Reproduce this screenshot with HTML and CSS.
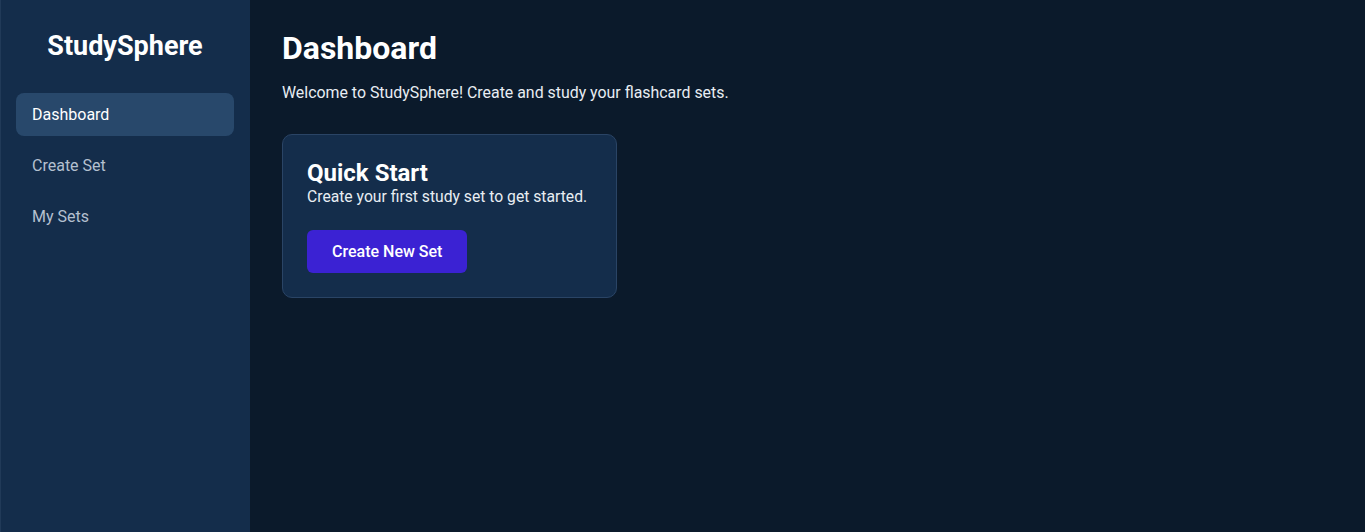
FILE: index.html
```html
<!DOCTYPE html>
<html lang="en">
<head>
<meta charset="utf-8">
<title>StudySphere</title>
<link rel="stylesheet" href="styles.css">
</head>
<body>
<div class="app">
  <aside class="sidebar">
    <div class="brand">StudySphere</div>
    <nav class="nav">
      <a class="nav-item active">Dashboard</a>
      <a class="nav-item">Create Set</a>
      <a class="nav-item">My Sets</a>
    </nav>
  </aside>
  <main class="main">
    <h1 class="title">Dashboard</h1>
    <p class="intro">Welcome to StudySphere! Create and study your flashcard sets.</p>
    <section class="card">
      <h2 class="card-title">Quick Start</h2>
      <p class="card-text">Create your first study set to get started.</p>
      <button class="btn">Create New Set</button>
    </section>
  </main>
</div>
</body>
</html>
```
FILE: styles.css
```css
* { box-sizing: border-box; }
html, body { margin: 0; height: 100%; }
body {
  font-family: Roboto, "Noto Sans", sans-serif;
  background: #0b1a2b;
  color: #f1f5f9;
}
.app { display: flex; min-height: 100vh; }
.sidebar {
  width: 250px;
  flex-shrink: 0;
  background: #142d4b;
  border-left: 1px solid #213a58;
  padding: 30px 16px 16px 15px;
}
.brand {
  font-size: 27px;
  font-weight: 700;
  text-align: center;
  color: #ffffff;
  line-height: 33px;
  margin-bottom: 30px;
}
.nav { display: flex; flex-direction: column; gap: 8px; }
.nav-item {
  display: block;
  padding: 12px 16px;
  border-radius: 8px;
  font-size: 16px;
  line-height: 19px;
  color: #b4c0d0;
  cursor: pointer;
}
.nav-item.active { background: #28486b; color: #ffffff; }
.main { flex: 1; padding: 28px 32px; }
.title {
  margin: 0;
  font-size: 32px;
  font-weight: 700;
  line-height: 40px;
  color: #ffffff;
}
.intro {
  margin: 15px 0 31px;
  font-size: 15.9px;
  line-height: 20px;
  color: #e8edf3;
}
.card {
  width: 335px;
  background: #142d4b;
  border: 1px solid #2a4465;
  border-radius: 10px;
  padding: 24px;
}
.card-title {
  margin: 0;
  font-size: 24px;
  font-weight: 700;
  line-height: 28px;
  color: #ffffff;
}
.card-text {
  margin: 0 0 23px;
  font-size: 15.7px;
  line-height: 20px;
  white-space: nowrap;
  color: #e8edf3;
}
.btn {
  font-family: inherit;
  font-size: 16px;
  font-weight: 500;
  line-height: 19px;
  color: #ffffff;
  background: #3b22d3;
  border: none;
  border-radius: 6px;
  padding: 12px 25px;
  cursor: pointer;
}
```
